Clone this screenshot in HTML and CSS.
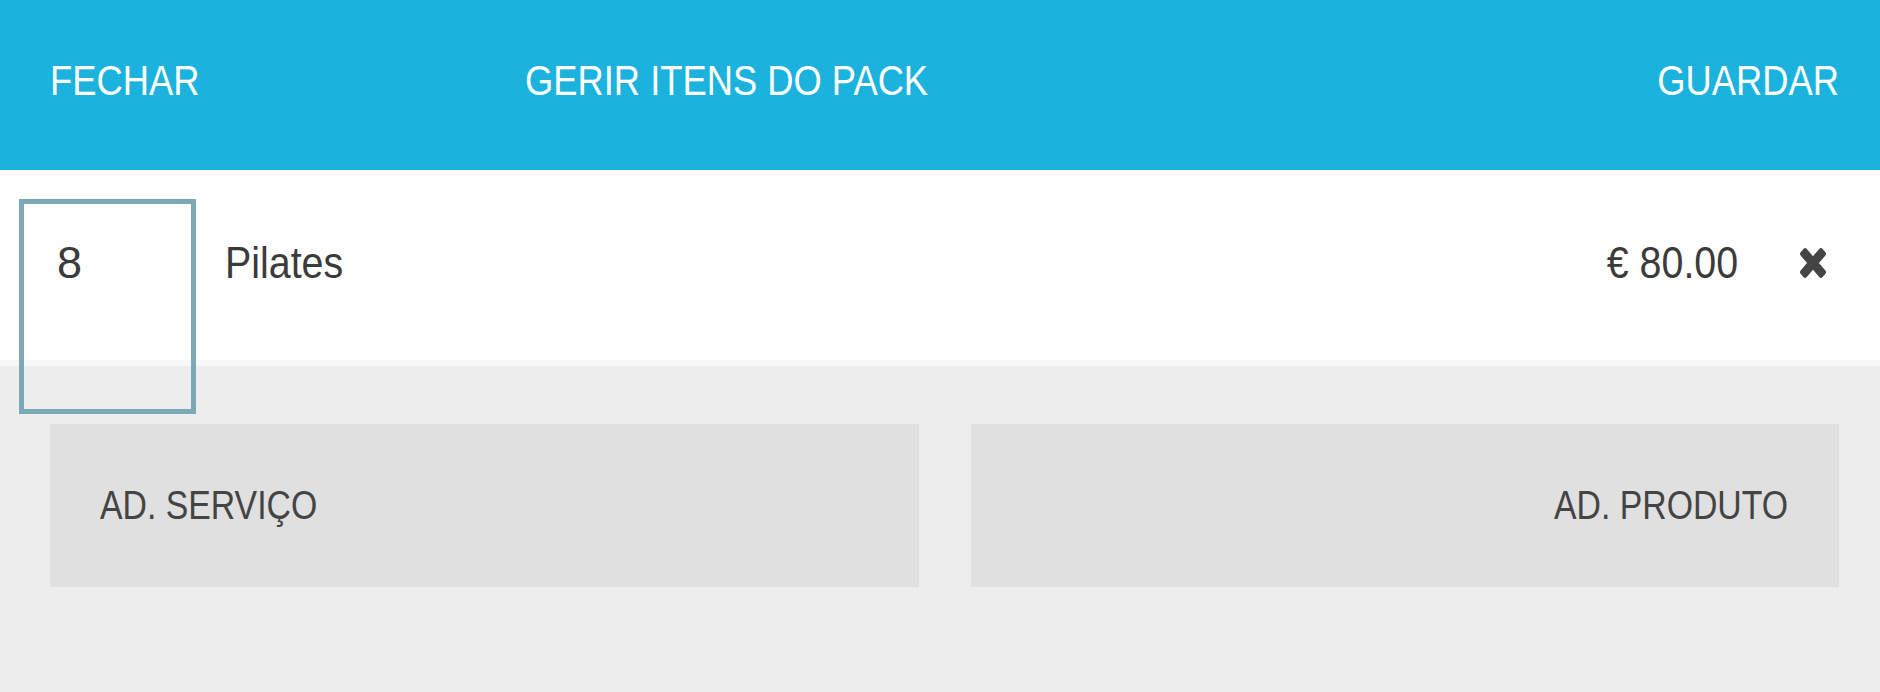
FILE: index.html
```html
<!DOCTYPE html>
<html>
<head>
  <title>Gerir itens do pack</title>
  <link rel="stylesheet" href="styles.css">
</head>
<body>
  <header class="topbar">
    <div class="close-btn"><span class="label">FECHAR</span></div>
    <div class="topbar-title"><span class="label">GERIR ITENS DO PACK</span></div>
    <div class="save-btn"><span class="label label-end">GUARDAR</span></div>
  </header>

  <ul class="pack-list">
    <li class="pack-item">
      <input type="text" class="qty" value="8">
      <span class="item-name label">Pilates</span>
      <span class="item-price label label-end">€ 80.00</span>
      <button class="remove-btn" type="button">
        <svg width="26" height="30" viewBox="302 366 1188 1188" preserveAspectRatio="none">
          <path fill="#444" d="M1490 1322q0 40-28 68l-136 136q-28 28-68 28t-68-28l-294-294-294 294q-28 28-68 28t-68-28l-136-136q-28-28-28-68t28-68l294-294-294-294q-28-28-28-68t28-68l136-136q28-28 68-28t68 28l294 294 294-294q28-28 68-28t68 28l136 136q28 28 28 68t-28 68l-294 294 294 294q28 28 28 68z"/>
        </svg>
      </button>
    </li>
  </ul>

  <div class="actions">
    <button class="add-btn" type="button"><span class="label">AD. SERVIÇO</span></button>
    <button class="add-btn add-right" type="button"><span class="label label-end">AD. PRODUTO</span></button>
  </div>
</body>
</html>
```

FILE: styles.css
```css
html, body {
  height: 100%;
}

body {
  margin: 0;
  padding: 0;
  display: flex;
  flex-direction: column;
  font-family: "Liberation Sans", Arial, Helvetica, sans-serif;
  color: #3b3b3b;
  background-color: #ededed;
}

/* narrow lettering of the tablet app */
.label {
  display: inline-block;
  white-space: nowrap;
  transform: scaleX(0.845);
  transform-origin: left center;
}

.label-end {
  transform-origin: right center;
}

/* top bar */
.topbar {
  height: 170px;
  box-sizing: border-box;
  flex-shrink: 0;
  display: flex;
  align-items: center;
  padding: 0 41px 10px 50px;
  background-color: #1bb3dd;
  color: #fff;
  font-size: 43px;
}

.close-btn {
  flex: 0 0 475px;
}

.topbar-title {
  flex-grow: 1;
}

.save-btn {
  text-align: right;
}

/* item list */
.pack-list {
  list-style-type: none;
  margin: 0;
  padding: 0;
  background-color: #fff;
}

.pack-item {
  height: 161px;
  display: flex;
  align-items: baseline;
  padding: 29px 54px 0 19px;
  border-bottom: 6px solid #f7f7f7;
  font-size: 45px;
}

.pack-item .label {
  transform: scaleX(0.875);
}

.qty {
  width: 177px;
  height: 215px;
  box-sizing: border-box;
  flex-shrink: 0;
  margin: 0;
  padding: 0 0 87px 33px;
  border: 5px solid #7aaab8;
  border-radius: 0;
  background: transparent;
  font-family: inherit;
  font-size: 45px;
  color: #3b3b3b;
  outline: none;
}

.item-name {
  flex-grow: 1;
  margin-left: 29px;
}

.remove-btn {
  margin-left: 62px;
  padding: 0;
  border: none;
  background: none;
  cursor: pointer;
}

.remove-btn svg {
  display: block;
}

/* add buttons */
.actions {
  flex-grow: 1;
  display: flex;
  gap: 52px;
  padding: 58px 41px 0 50px;
  align-items: flex-start;
}

.add-btn {
  flex: 1;
  height: 163px;
  padding: 0 51px 0 50px;
  border: none;
  background-color: #e0e0e0;
  font-family: inherit;
  font-size: 40px;
  color: #444;
  text-align: left;
  cursor: pointer;
}

.add-right {
  text-align: right;
}
```
